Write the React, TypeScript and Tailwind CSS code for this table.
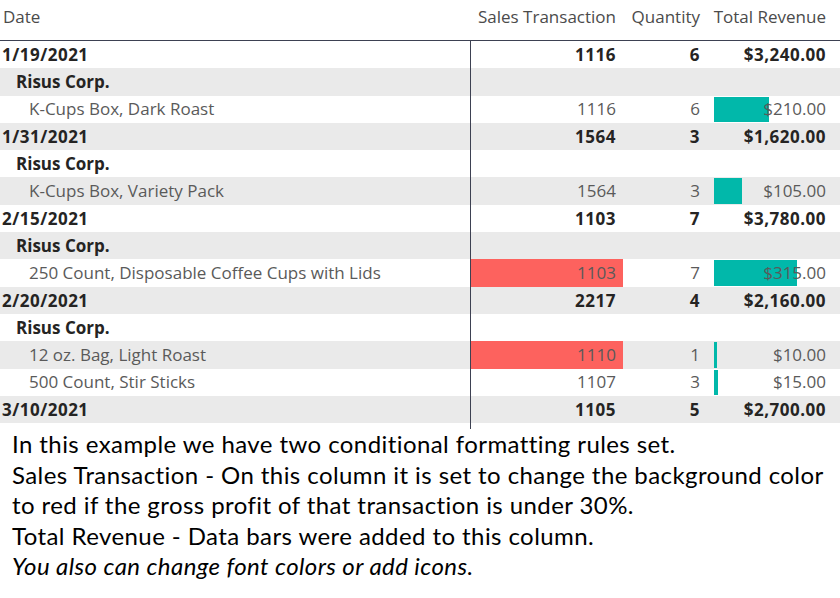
import React from "react";

type Row = {
  level: 0 | 1 | 2;
  label: string;
  st?: string;
  qty?: string;
  rev?: string;
  revVal?: number;
  red?: boolean;
};

const rows: Row[] = [
  { level: 0, label: "1/19/2021", st: "1116", qty: "6", rev: "$3,240.00" },
  { level: 1, label: "Risus Corp." },
  { level: 2, label: "K-Cups Box, Dark Roast", st: "1116", qty: "6", rev: "$210.00", revVal: 210 },
  { level: 0, label: "1/31/2021", st: "1564", qty: "3", rev: "$1,620.00" },
  { level: 1, label: "Risus Corp." },
  { level: 2, label: "K-Cups Box, Variety Pack", st: "1564", qty: "3", rev: "$105.00", revVal: 105 },
  { level: 0, label: "2/15/2021", st: "1103", qty: "7", rev: "$3,780.00" },
  { level: 1, label: "Risus Corp." },
  { level: 2, label: "250 Count, Disposable Coffee Cups with Lids", st: "1103", qty: "7", rev: "$315.00", revVal: 315, red: true },
  { level: 0, label: "2/20/2021", st: "2217", qty: "4", rev: "$2,160.00" },
  { level: 1, label: "Risus Corp." },
  { level: 2, label: "12 oz. Bag, Light Roast", st: "1110", qty: "1", rev: "$10.00", revVal: 10, red: true },
  { level: 2, label: "500 Count, Stir Sticks", st: "1107", qty: "3", rev: "$15.00", revVal: 15 },
  { level: 0, label: "3/10/2021", st: "1105", qty: "5", rev: "$2,700.00" },
];

const font = { fontFamily: '"Open Sans", "Noto Sans", sans-serif' };

export default function App() {
  return (
    <div className="w-[840px] h-[598px] bg-white overflow-hidden">
      <div style={font} className="text-[17px]">
        <div className="flex h-[41px] items-center pb-[6px] text-[#4b4b4b] border-b border-[#3d4152]">
          <div className="w-[471px] pl-[3px]">Date</div>
          <div className="w-[152px] text-right pr-[7px]">Sales Transaction</div>
          <div className="w-[84px] text-right pr-[7px]">Quantity</div>
          <div className="w-[127px] text-right pr-[8px]">Total Revenue</div>
        </div>
        {rows.map((r, i) => {
          const bg = i % 2 === 0 ? "bg-white" : "bg-[#eaeaea]";
          const bold = r.level < 2;
          const txt = bold ? "font-bold text-[#252423] tracking-[0.5px]" : "text-[#5a5a5a]";
          const pad = r.level === 0 ? "pl-[2px]" : r.level === 1 ? "pl-[16px]" : "pl-[29px]";
          return (
            <div key={i} className={`flex h-[27.3px] items-center ${bg} ${txt}`}>
              <div
                className={`w-[471px] h-full flex items-center border-r border-[#3d4152] ${pad} ${
                  r.level === 1 ? "tracking-normal" : ""
                }`}
              >
                {r.label}
              </div>
              <div
                className={`w-[152px] h-full flex items-center justify-end pr-[7px] ${r.red ? "bg-[#fd625e]" : ""}`}
              >
                {r.st}
              </div>
              <div className="w-[84px] h-full flex items-center justify-end pr-[7px]">{r.qty}</div>
              <div className="relative w-[127px] h-full flex items-center justify-end pr-[8px]">
                {r.revVal !== undefined && (
                  <div
                    className="absolute left-[7px] top-[1px] bottom-[1px] bg-[#01b8aa]"
                    style={{ width: Math.max(2, r.revVal * 0.2635) }}
                  />
                )}
                <span className="relative">{r.rev}</span>
              </div>
            </div>
          );
        })}
        <div className="flex h-[6px]">
          <div className="w-[471px] h-full border-r border-[#3d4152]" />
        </div>
      </div>
      <div
        className="pl-[12px] text-[24px] leading-[30.5px] tracking-[0.42px] text-black"
        style={{ fontFamily: 'Lato, "Open Sans", sans-serif' }}
      >
        <p>In this example we have two conditional formatting rules set.</p>
        <p>Sales Transaction - On this column it is set to change the background color</p>
        <p>to red if the gross profit of that transaction is under 30%.</p>
        <p>Total Revenue - Data bars were added to this column.</p>
        <p className="italic">You also can change font colors or add icons.</p>
      </div>
    </div>
  );
}
